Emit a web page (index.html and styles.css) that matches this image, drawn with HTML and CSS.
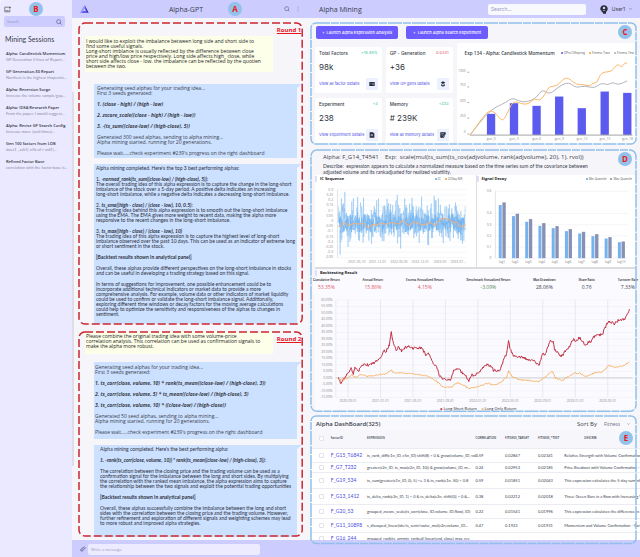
FILE: index.html
```html
<!DOCTYPE html>
<html lang="en">
<head>
<meta charset="utf-8">
<title>Alpha-GPT</title>
<link rel="stylesheet" href="styles.css">
</head>
<body>
<div class="app">
  <aside class="sidebar">
    <div class="sidebar-top">
      <button class="icon-button" aria-label="New session"><svg class="icon-new" viewBox="0 0 18 18"><path d="M12 3H2v12h13V9M15 1v6M12 4h6M4 12h8" fill="none" stroke="#444" stroke-width="1.6"/></svg></button>
      <span class="marker">B</span>
    </div>
    <label class="side-search">
      <input type="search" placeholder="Search" aria-label="Search sessions">
      <svg class="icon-search" viewBox="0 0 18 18"><circle cx="8" cy="8" r="6" fill="none" stroke="#555a88" stroke-width="2"/><path d="M12 12l5 5" stroke="#555a88" stroke-width="2"/></svg>
    </label>
    <h2 class="side-title">Mining Sessions</h2>
    <ul class="sessions">
      <li><b>Alpha: Candlestick Momentum</b><span>GP Generation 5 lines of Report...</span></li>
      <li><b>GP Generation-50 Report</b><span>Northest is the highest thopenist...</span></li>
      <li><b>Alpha: Reversion Surge</b><span>Increase the volume sample/gap...</span></li>
      <li><b>Alpha: IDEA Research Paper</b><span>From the paper, I would suggest...</span></li>
      <li><b>Alpha: Revise GP Search Config</b><span>Increase move (and/times)...</span></li>
      <li><b>Gen 100 factors from LOB</b><span>does1 _ask1( n5b of r-askT(...</span></li>
      <li><b>Refined Factor Base</b><span>correlation with the factor base is...</span></li>
    </ul>
  </aside>

  <main class="chat">
    <header class="bar chat-bar">
      <svg class="logo" viewBox="0 0 27 27"><path d="M14 1L26 24H1z" fill="#6a5cf0"/><path d="M13 9l5 9H9z" fill="#ccf"/><path d="M14 1L1 24l5-1L15 7z" fill="#8fa0ff"/><path d="M14 1l12 23-6-3z" fill="#3d2fb8"/></svg>
      <h1 class="chat-title">Alpha-GPT</h1>
      <span class="marker">A</span>
      <button class="icon-button chat-search" aria-label="Search chat"><svg class="icon-search" viewBox="0 0 18 18"><circle cx="8" cy="8" r="6" fill="none" stroke="#667" stroke-width="2"/><path d="M12 12l4 4" stroke="#667" stroke-width="2"/></svg></button>
      <button class="icon-button" aria-label="More"><svg class="icon-dots" viewBox="0 0 6 18"><g fill="#889"><circle cx="3" cy="3" r="1.5"/><circle cx="3" cy="9" r="1.5"/><circle cx="3" cy="15" r="1.5"/></g></svg></button>
    </header>
    <div class="chat-body">
      <section class="round round-one">
        <svg class="frame frame-red"><rect x="1" y="1" rx="6"/></svg>
        <h2 class="round-label">Round 1</h2>
        <div class="bubble user user-tall">
          <p>I would like to exploit the imbalance between long side and short side to<br>find some useful signals.<br>Long-short imblance is usually reflected by the difference between close<br>price and high/low price respectively. Long side affects high_ close, while<br>short side affects close - low. the imbalance can be reflected by the quotien<br>between the two.</p>
        </div>
        <div class="bubble bot bot-first">
          <p>Generating seed alphas for your trading idea...<br>First 3 seeds generated:</p>
          <p><em>1. (close - high) / (high - low)</em></p>
          <p><em>2. zscore_scale((close - high) / (high - low))</em></p>
          <p><em>3. -(ts_sum((close-low) / (high-close), 5))</em></p>
          <p>Generated 300 seed alphas, sending to alpha mining...<br>Alpha mining started, running for 20 generations.</p>
          <p>Please wait.....check experiment #239's progress on the right dashboard</p>
        </div>
        <div class="bubble bot bot-long">
          <p>Alpha mining completed. Here's the top 3 best performing alphas:</p>
          <p>1. <em>-normed_rank(ts_sum((close-low) / (high-close), 5)):</em><br>The overall trading idea of this alpha expression is to capture the change in the long-short<br>imbalance of the stock over a 5-day period. A positive delta indicates an increasing<br>long-short imbalance, while a negative delta indicates a decreasing long-short imbalance.</p>
          <p>2. <em>ts_ema((high - close) / (close - low), 10, 0.5):</em><br>The trading idea behind this alpha expression is to smooth out the long-short imbalance<br>using the EMA. The EMA gives more weight to recent data, making the alpha more<br>responsive to the recent changes in the long-short imbalance.</p>
          <p>3. <em>ts_max((high - close) / (close - low), 10)</em><br>The trading idea of this alpha expression is to capture the highest level of long-short<br>imbalance observed over the past 10 days. This can be used as an indicator of extreme long<br>or short sentiment in the stock.</p>
          <p><strong>[Backtest results shown in analytical panel]</strong></p>
          <p>Overall, these alphas provide different perspectives on the long-short imbalance in stocks<br>and can be useful in developing a trading strategy based on this signal.</p>
          <p>In terms of suggestions for improvement, one possible enhancement could be to<br>incorporate additional technical indicators or market data to provide a more<br>comprehensive analysis. For example, volume data or other indicators of market liquidity<br>could be used to confirm or validate the long-short imbalance signal. Additionally,<br>exploring different time windows or decay factors for the moving average calculations<br>could help to optimize the sensitivity and responsiveness of the alphas to changes in<br>sentiment.</p>
        </div>
      </section>
      <section class="round round-two">
        <svg class="frame frame-red"><rect x="1" y="1" rx="6"/></svg>
        <h2 class="round-label">Round 2</h2>
        <div class="bubble user user-short">
          <p>Please combine the original trading idea with some volume-price<br>correlation analysis. This correlation can be used as confirmation signals to<br>make the alpha more robust.</p>
        </div>
        <div class="bubble bot bot-first">
          <p>Generating seed alphas for your trading idea...<br>First 3 seeds generated:</p>
          <p><em>1. ts_corr(close, volume, 10) * rank(ts_mean((close-low) / (high-close), 3))</em></p>
          <p><em>2. ts_corr(close, volume, 5) * ts_mean((close-low) / (high-close), 5)</em></p>
          <p><em>3. ts_corr(close, volume, 10) * ((close-low) / (high-close))</em></p>
          <p>Generated 50 seed alphas, sending to alpha mining...<br>Alpha mining started, running for 20 generations.</p>
          <p>Please wait.....check experiment #239's progress on the right dashboard</p>
        </div>
        <div class="bubble bot bot-best">
          <p>Alpha mining completed. Here's the best performing alpha:</p>
          <p><em>1. -rank(ts_corr(close, volume, 10)) * rank(ts_mean((close-low) / (high-close), 3)):</em></p>
          <p>The correlation between the closing price and the trading volume can be used as a<br>confirmation signal for the imbalance between the long and short sides. By multiplying<br>the correlation with the ranked mean imbalance, the alpha expression aims to capture<br>the relationship between the two signals and exploit the potential trading opportunities</p>
          <p><strong>[Backtest results shown in analytical panel]</strong></p>
          <p>Overall, these alphas successfully combine the imbalance between the long and short<br>sides with the correlation between the closing price and the trading volume. However,<br>further refinement and exploration of different signals and weighting schemes may lead<br>to more robust and improved alpha strategies.</p>
        </div>
      </section>
    </div>
    <footer class="bar composer">
      <button class="icon-button" aria-label="Attach file"><svg class="icon-clip" viewBox="0 0 18 18"><path d="M14 6l-7 7c-2 2-5-1-3-3l7-7c3-2 6 1 4 4l-7 8c-3 3-8-1-5-5l6-6" fill="none" stroke="#5c6080" stroke-width="1.8"/></svg></button>
      <input class="message" type="text" placeholder="Write a message" aria-label="Message">
    </footer>
  </main>

  <div class="mining">
    <header class="bar mining-bar">
      <h1>Alpha Mining</h1>
      <input class="top-search" type="search" placeholder="Search..." aria-label="Search">
      <button class="user-menu"><svg class="avatar" viewBox="0 0 24 27"><path d="M12 1c6 0 11 4 11 10 0 5-3 8-5 9v6H9v-4H5v-4l-4-4C0 6 5 1 12 1z" fill="#2b2b38"/><circle cx="12" cy="9" r="4" fill="#ccf"/><path d="M8 17c1-3 7-3 9 0z" fill="#ccf"/></svg>User1<svg class="chevron" viewBox="0 0 9 6"><path d="M1 1l3.500 3.500L8 1" fill="none" stroke="#555" stroke-width="1.500"/></svg></button>
    </header>

    <section class="panel overview">
      <svg class="frame frame-blue"><rect x="1" y="1" rx="5"/></svg>
      <div class="actions">
        <button class="launch"><i>+</i>Launch Alpha Expression Analysis</button>
        <button class="launch"><i>+</i>Launch Alpha Search Experiment</button>
        <span class="marker">C</span>
      </div>
      <div class="overview-grid">
        <div class="cards">
          <article class="card"><div class="card-head"><h3>Total Factors</h3><span class="up">+16.46%</span></div><p class="figure">98k</p><div class="card-foot"><a href="#factors">View all factor details</a><span class="badge"><svg viewBox="0 0 18 18"><rect x="1" y="3" width="16" height="12" rx="1" fill="#222838"/><path d="M3 10l3-3 3 3M10 7h5M10 11h5" stroke="#cdd6f5" fill="none" stroke-width="1.500"/></svg></span></div></article>
          <article class="card"><div class="card-head"><h3>GP - Generation</h3><span class="down">0.0341</span></div><p class="figure">+36</p><div class="card-foot"><a href="#gp">View GP gens details</a><span class="badge"><svg viewBox="0 0 18 18"><path d="M9 1l7 4-7 4-7-4z" fill="#222838"/><path d="M3 9l6 3 6-3v5l-6 3-6-3z" fill="#4a5062"/></svg></span></div></article>
          <article class="card"><div class="card-head"><h3>Experiment</h3><span class="up">+3</span></div><p class="figure">238</p><div class="card-foot"><a href="#experiments">View Experiment details</a><span class="badge"><svg viewBox="0 0 18 18"><path d="M2 1h10l4 4v12H2z" fill="#222838"/><path d="M6 13V7h5v6M6 10h5" stroke="#dde3fa" fill="none" stroke-width="1.500"/></svg></span></div></article>
          <article class="card"><div class="card-head"><h3>Memory</h3><span class="up">+233</span></div><p class="figure"># 239K</p><div class="card-foot"><a href="#memory">view all memory details</a><span class="badge"><svg viewBox="0 0 18 18"><path d="M1 1h16v5l-5 11H1z" fill="#222838"/><path d="M4 5h8M4 9h6M9 15l7-8" stroke="#dde3fa" fill="none" stroke-width="1.500"/></svg></span></div></article>
        </div>
        <div class="exp-card">
          <div class="exp-head"><h3>Exp 134 - Alpha: Candlestick Momentum</h3><ul class="legend"><li class="k-indigo">GPro Offspring</li><li class="k-orange">Fitness Train</li><li class="k-gray">Fitness Test</li></ul></div>
          <svg class="plot" id="exp" viewBox="456 174 540 257" role="img" aria-label="Fitness by generation"></svg>
        </div>
      </div>
    </section>

    <section class="panel analysis">
      <svg class="frame frame-blue"><rect x="1" y="1" rx="6"/></svg>
      <span class="marker marker-corner">D</span>
      <h2 class="alpha-name">Alpha: F_G14_T4541 &nbsp; &nbsp;Exp: &nbsp;scale(mul(ts_sum(ts_cov(adjvolume, rank(adjvolume), 20), 1), rvol))</h2>
      <p class="describe">Describe: &nbsp;expression appears to calculate a normalized measure based on the time series sum of the covariance between<br>adjusted volume and its rankadjusted for realized volatility.</p>
      <div class="figures">
        <div class="figure-box"><div class="plot-head"><h3>IC Sequence</h3><ul class="legend"><li class="k-sky">IC</li><li class="k-orange">22Day MA</li></ul></div>
          <svg class="plot" id="ic" viewBox="30 114 483 252" role="img" aria-label="IC sequence"></svg></div>
        <div class="figure-box"><div class="plot-head"><h3>Signal Decay</h3><ul class="legend"><li class="k-sky">Min Quantile</li><li class="k-slate">Max Quantile</li></ul></div>
          <svg class="plot" id="decay" viewBox="516 114 477 252" role="img" aria-label="Signal decay"></svg></div>
      </div>
      <div class="plot-head backtest-head"><h3>Backtesting Result</h3></div>
      <dl class="stats">
        <div><dt>Cumulative Return</dt><dd class="red">53.35%</dd></div>
        <div><dt>Annual Return</dt><dd class="red">15.86%</dd></div>
        <div><dt>Excess Annualized Return</dt><dd class="red">4.15%</dd></div>
        <div><dt>Benchmark Annualized Return</dt><dd class="green">-3.09%</dd></div>
        <div><dt>Max Drawdown</dt><dd>28.06%</dd></div>
        <div><dt>Share Ratio</dt><dd>0.76</dd></div>
        <div><dt>Turnover Rate</dt><dd>7.33%</dd></div>
      </dl>
      <svg class="plot" id="backtest" viewBox="22 84 972 354" role="img" aria-label="Backtesting result"></svg>
    </section>

    <section class="panel dashboard">
      <svg class="frame frame-blue frame-top"><rect x="1" y="1" rx="5"/></svg>
      <span class="marker marker-table">E</span>
      <div class="dash-head"><h2>Alpha DashBoard(325)</h2><label for="sort">Sort By</label><select id="sort"><option>Fitness</option></select><svg class="chevron" viewBox="0 0 9 6"><path d="M1 1l3.500 3.500L8 1" fill="none" stroke="#777" stroke-width="1.500"/></svg></div>
      <table>
        <colgroup><col class="c-check"><col class="c-factor"><col class="c-expr"><col class="c-corr"><col class="c-fit"><col class="c-test"><col class="c-desc"></colgroup>
        <thead><tr><th><input type="checkbox" aria-label="Select all"></th><th>FactorID</th><th>EXPRESSION</th><th>CORRELATION</th><th>FITNESS_TARGET</th><th>FITNESS_*TEST</th><th class="th-desc">DESCRIB</th></tr></thead>
        <tbody>
          <tr><td><input type="checkbox" aria-label="Select F_G15_T6842"></td><td><a href="#f1">F_G15_T6842</a></td><td>ts_rank_diff(c1n_ID, c5n_ID) shift(8) &gt; 0 &amp; grow(volume_ID, vol</td><td>0.59</td><td>0.02847</td><td>0.02341</td><td>Relative Strength with Volume Confirmation - W</td></tr>
          <tr class="row-s"><td><input type="checkbox" aria-label="Select F_G7_T232"></td><td><a href="#f2">F_G7_T232</a></td><td>greater(c2n_ID, ts_max(c2n_ID, 10)) &amp; grow(volume_ID, m...</td><td>0.24</td><td>0.02953</td><td>0.02185</td><td>Price Breakout with Volume Confirmation - Var</td></tr>
          <tr class="row-l"><td><input type="checkbox" aria-label="Select F_G19_534"></td><td><a href="#f3">F_G19_534</a></td><td>ts_sum(greater(c1n_ID, 0), 5) &gt;= 3 &amp; ts_rank(c1n, 50) &gt; 0.8</td><td>0.59</td><td>0.01851</td><td>0.02043</td><td>This expression calculates the 5-day sum of the</td></tr>
          <tr class="row-l"><td><input type="checkbox" aria-label="Select F_G13_1412"></td><td><a href="#f4">F_G13_1412</a></td><td>ts_delta_rank(c2n_ID, 1) &gt; 0 &amp; ts_delta(c2n, shift(0)) &gt; 0 &amp;...</td><td>0.38</td><td>0.02212</td><td>0.02018</td><td>Three Green Bars in a Row with Increasing Vol</td></tr>
          <tr><td><input type="checkbox" aria-label="Select F_G20_53"></td><td><a href="#f5">F_G20_53</a></td><td>grouped_zscore_scale(ts_corr(close, ID,volume, ID,flow), ID)</td><td>0.22</td><td>0.01541</td><td>0.01996</td><td>This expression calculates the difference in the</td></tr>
          <tr><td><input type="checkbox" aria-label="Select F_G11_10898"></td><td><a href="#f6">F_G11_10898</a></td><td>s_discoped_linear(ids/ts_semi/swise_mul(c2n,volume_ID...</td><td>0.47</td><td>0.1923</td><td>0.01931</td><td>Momentum and Volume Confirmation - Variat</td></tr>
          <tr class="row-last"><td><input type="checkbox" aria-label="Select F_G16_244"></td><td><a href="#f7">F_G16_244</a></td><td>grouped_rank(ts_argmin_ranked( linear(end, close) max, rev</td><td></td><td></td><td></td><td></td></tr>
        </tbody>
      </table>
    </section>
    <footer class="mining-footer"></footer>
  </div>
</div>
<script src="charts.js"></script>
</body>
</html>
```
FILE: styles.css
```css
* { box-sizing: border-box; }
body { margin: 0; background: #f6f5fa; color: #3a3f4c; font-family: "Open Sans", "Noto Sans", sans-serif; font-size: 5px; line-height: 5px; }
h1, h2, h3, p, ul, dl, dd { margin: 0; padding: 0; font-weight: 400; }
ul { list-style: none; }
button, input, select { font: inherit; color: inherit; border: 0; margin: 0; padding: 0; background: none; appearance: none; }
input::placeholder { color: #9a9ac0; opacity: 1; }
a { color: #4a4ae0; text-decoration: none; }
svg { display: block; }
.app { display: grid; grid-template-columns: minmax(0, 72fr) minmax(0, 235fr) minmax(0, 333fr); min-height: 100vh; }
.bar { display: flex; align-items: center; height: 18px; background: #ccccff; }
.marker { display: grid; place-items: center; flex: none; width: 14px; height: 14px; border-radius: 50%; background: #93c1ea; color: #f01818; font: 700 8px/14px "Open Sans", sans-serif; }
.icon-search { width: 6px; height: 6px; }
.icon-button { flex: none; }

.sidebar { background: #ebe9ff; padding: 2px 4px; font-family: Lato, sans-serif; border-top-left-radius: 4px; }
.sidebar-top { display: flex; gap: 18px; height: 14px; }
.icon-new { width: 7px; height: 7px; }
.side-search { display: flex; align-items: center; height: 11px; margin: 0 3px 0 0; padding: 0 3px; border-radius: 2px; background: #ccccff; }
.side-search input { flex: 1; min-width: 0; font-size: 4px; }
.side-title { margin: 8px 0 7px 1px; font: 400 7px/9px Lato, sans-serif; }
.sessions { display: grid; gap: 6px; padding-left: 2px; white-space: nowrap; }
.sessions b, .sessions span { display: block; line-height: 6px; }
.sessions b { color: #303440; font-size: 4px; font-family: "Open Sans", sans-serif; font-weight: 600; }
.sessions span { font-size: 4px; color: #8c8ca6; }

.chat { display: flex; flex-direction: column; background: #f6f5fa; }
.chat-bar { padding: 0 8px; }
.logo { width: 9px; height: 9px; }
.chat-title { flex: 1; text-align: right; font: 400 7px/9px "Open Sans", sans-serif; }
.chat-bar .marker { margin: 0 42px 0 25px; }
.chat-search { margin-right: 7px; }
.icon-dots { width: 2px; height: 6px; }
.chat-body { flex: 1; display: grid; align-content: start; gap: 6px; padding: 4px 4px 3px 6px; background: linear-gradient(#dedee4, #dedee4) 0 74px / 2px 374px no-repeat; }
.round { position: relative; padding: 0 6px 0 7px; }
.round-one { padding-top: 14px; padding-bottom: 1px; }
.round-two { padding-top: 1px; }
.frame { position: absolute; inset: 0; width: 100%; height: 100%; pointer-events: none; z-index: 1; }
.frame rect { width: calc(100% - 2px); height: calc(100% - 2px); fill: none; }
.frame-red rect { stroke: #cc2630; stroke-width: 1.5px; stroke-dasharray: 8 3; }
.frame-blue rect { stroke: #8fc0ea; stroke-width: 1.5px; stroke-dasharray: 14 1 8 1; }
.round-label { position: absolute; top: 4px; right: 2px; color: #e8141c; font: 700 6px/8px "Open Sans", sans-serif; text-decoration: underline; }
.bubble { white-space: nowrap; }
.bubble em { font-weight: 700; }
.bubble p + p { margin-top: 6px; }
.user { margin-right: 24px; padding: 3px 1px; background: #fdffe8; color: #222; border-radius: 1px; }
.user-tall { min-height: 35px; }
.user-short { min-height: 22px; padding-top: 2px; }
.bot { position: relative; margin: 6px 0 0 9px; padding: 2px 3px; background: #cce0ff; }
.bot::after { content: ""; position: absolute; top: 0; left: 100%; border-top: 4px solid #cce0ff; border-right: 5px solid transparent; }
.bot-first { min-height: 74px; margin-top: 12px; }
.round-two .bot-first { margin-top: 8px; min-height: 77px; padding: 3px 1px; }
.bot-long { min-height: 160px; padding: 2px; font-family: Lato, sans-serif; color: #2c3242; }
.bot-best { min-height: 92px; padding: 2px 6px; font-family: Lato, sans-serif; color: #2c3242; }
.composer { padding: 0 8px; gap: 2px; }
.icon-clip { width: 6px; height: 6px; }
.message { flex: 0 1 172px; height: 11px; padding: 0 3px; border-radius: 2px; background: #ecebff; font-size: 4px; }

.mining { position: relative; overflow: hidden; display: grid; align-content: start; padding-bottom: 13px; font-family: Inter, sans-serif; font-size: 4px; }
.mining-bar { padding: 0 8px 0 12px; }
.mining-bar h1 { flex: 1; font: 400 7px/9px "Open Sans", sans-serif; }
.top-search { width: 98px; height: 11px; padding: 0 3px; border-radius: 2px; background: #f8f8ff; font-size: 5px; }
.user-menu { display: flex; align-items: center; gap: 4px; margin-left: 14px; font-size: 5px; line-height: 9px; }
.avatar { width: 8px; height: 9px; }
.chevron { width: 3px; height: 2px; }
.panel { position: relative; margin: 4px 3px 0; padding: 4px 1px 1px 5px; }
.analysis { padding-top: 4px; }
.actions { display: flex; gap: 8px; height: 17px; padding-left: 1px; }
.launch { flex: 0 1 82px; height: 13px; border-radius: 2px; background: #6c5cff; color: #fff; font-size: 4px; font-weight: 500; white-space: nowrap; }
.launch i { font-style: normal; margin-right: 2px; }
.actions .marker { margin: -1px 4px 0 auto; }
.overview-grid { display: grid; grid-template-columns: minmax(0, 138fr) minmax(0, 180fr); column-gap: 4px; }
.cards { display: grid; grid-template-columns: 1fr 1fr; gap: 5px 4px; padding-top: 4px; }
.card { height: 46px; padding: 3px 4px; border-radius: 2px; background: #fff; white-space: nowrap; }
.card-head, .card-foot { display: flex; justify-content: space-between; align-items: center; line-height: 6px; }
.card-head h3 { font-weight: 500; }
.up { color: #2cc09c; }
.down { color: #e06070; }
.figure { margin: 7px 0 6px; font-size: 8px; line-height: 9px; color: #2e3340; }
.badge { display: grid; place-items: center; width: 12px; height: 12px; background: #edf0ff; }
.badge svg { width: 6px; height: 6px; }
.exp-card { background: #fff; padding-top: 7px; border-radius: 2px 0 0 0; }
.exp-head { display: flex; justify-content: space-between; padding: 0 2px 0 8px; line-height: 6px; height: 8px; white-space: nowrap; }
.exp-head h3 { font-family: "Open Sans", sans-serif; font-weight: 600; }
.legend { display: flex; gap: 4px; font-size: 3px; color: #666; }
.legend li::before { content: ""; display: inline-block; width: 2px; height: 2px; margin-right: 1px; border-radius: 50%; background: currentColor; vertical-align: middle; }
.k-indigo::before { color: #5a5af0; } .k-orange::before { color: #f5a03c; } .k-gray::before { color: #aaa; } .k-sky::before { color: #5aa5ea; } .k-slate::before { color: #7d88ac; }
.plot { width: 100%; height: auto; overflow: hidden; font: 10px "Open Sans", sans-serif; }
.alpha-name { padding-left: 8px; font: 400 6px/8px "Open Sans", sans-serif; white-space: nowrap; }
.describe { padding: 2px 0 0 8px; font: 5px/6px Lato, sans-serif; white-space: nowrap; }
.marker-corner { position: absolute; top: 3px; right: 5px; }
.figures { display: grid; grid-template-columns: minmax(0, 161fr) minmax(0, 159fr); }
.figure-box { background: #fff; border-bottom: 2px solid #dcdcdc; }
.figure-box + .figure-box { box-shadow: -1px 0 #ddd; }
.plot-head { display: flex; justify-content: space-between; align-items: center; height: 8px; padding-right: 4px; }
.figure-box:first-child .plot-head { padding-right: 14px; }
.plot-head h3 { padding-left: 3px; font: 700 4px/6px "Open Sans", sans-serif; border-left: 2px solid #dfdffa; color: #222; }
.stats { display: flex; justify-content: space-between; margin: 0 -2px; padding-bottom: 3px; text-align: center; white-space: nowrap; }
.stats dt { font-size: 3px; line-height: 6px; color: #333; font-weight: 600; }
.stats dd { font: 5px/8px "Open Sans", sans-serif; }
.red { color: #e0606a; } .green { color: #4f8a56; }
.analysis > .plot, .backtest-head, .stats { background: #fbfaff; }
.dashboard { margin-top: 3px; padding: 2px 0 0 1px; background: #f9f9fd; }
.dash-head { display: flex; align-items: center; gap: 7px; height: 13px; padding: 0 7px 0 5px; font: 500 6px/8px "Open Sans", sans-serif; }
.dash-head h2 { flex: 1; font-size: 6px; font-weight: 600; }
.dash-head select { width: 16px; font-size: 5px; color: #667; }
table { width: calc(100% + 3px); table-layout: fixed; border-collapse: collapse; white-space: nowrap; font: 4px/5px Lato, sans-serif; }
th, td { padding: 0; height: 14px; text-align: left; font-weight: 400; border-bottom: 1px solid #ebebf2; background: #fff; }
th { height: 18px; font: 600 3px/5px "Open Sans", sans-serif; background: #f6f6fb; }
.th-desc { padding-left: 20px; }
.row-s td { height: 10px; } .row-l td { height: 16px; } .row-last td { height: 12px; }
td a { font-size: 5px; }
td:first-child, th:first-child { padding-left: 8px; }
input[type="checkbox"] { display: block; width: 5px; height: 5px; border: 1px solid #e2e2ee; border-radius: 1px; background: #fff; }
.c-check { width: 6%; } .c-factor { width: 11%; } .c-expr { width: 33%; } .c-corr { width: 9%; } .c-fit { width: 10%; } .c-test { width: 8%; } .c-desc { width: 23%; }
.marker-table { position: absolute; top: 16px; right: 4px; }
.mining-footer { position: absolute; inset: auto 0 0; height: 18px; background: #ccccff; }
```
FILE: charts.js
```js
const line = (x1, y1, x2, y2, c, w = 1) => `<path d="M${x1} ${y1}L${x2} ${y2}" stroke="${c}" stroke-width="${w}" fill="none"/>`;
const text = (x, y, s, anchor = 'middle', c = '#888') => `<text x="${x}" y="${y + 3}" text-anchor="${anchor}" fill="${c}">${s}</text>`;
const rect = (x, y, w, h, c) => `<rect x="${x}" y="${y}" width="${w}" height="${h}" fill="${c}"/>`;
const poly = (pts, c, w) => `<path d="M${pts.map(p => p.map(v => v.toFixed(1)).join(' ')).join('L')}" stroke="${c}" stroke-width="${w}" fill="none" stroke-linejoin="round"/>`;
let seed = 11;
const rand = () => (seed = (seed * 16807) % 2147483647) / 2147483647;
const put = (id, s) => { document.getElementById(id).innerHTML = s; };

// Smooth curve through points by quadratic midpoints
function smooth(p, c) {
  let d = `M${p[0]}`;
  for (let i = 1; i < p.length - 1; i++) d += `Q${p[i]} ${(p[i][0] + p[i + 1][0]) / 2},${(p[i][1] + p[i + 1][1]) / 2}`;
  return `<path d="${d}L${p[p.length - 1]}" stroke="${c}" stroke-width="3" fill="none"/>`;
}
// Jagged series between way points
function jagged(p, step, amp) {
  const out = [];
  for (let i = 0; i < p.length - 1; i++) {
    const [x0, y0] = p[i], [x1, y1] = p[i + 1];
    for (let x = x0; x < x1; x += step) out.push([x, y0 + (y1 - y0) * (x - x0) / (x1 - x0) + (rand() - 0.5) * amp]);
  }
  out.push(p[p.length - 1]);
  return out;
}

let s = '';
[['1000', 212], ['750', 256], ['500', 303], ['250', 350], ['0', 398]].forEach(([t, y]) => { s += text(482, y, t, 'end') + line(487, y + 5, 493, y + 5, '#888', 2); });
[[546, 342], [615, 310], [683, 318], [751, 290], [819, 325], [888, 275], [956, 279]].forEach(([x, y], i) => {
  s += rect(x, y, 25, 405 - y, '#5b5bef') + text(x + 13, 418, 'gen_' + [0, 3, 6, 9, 12, 15, 18][i]);
});
s += line(494, 406, 984, 406, '#777', 2);
s += smooth([[496,405],[530,360],[560,330],[580,318],[600,310],[622,293],[640,303],[665,308],[695,294],[712,268],[735,284],[760,262],[785,248],[800,252],[815,264],[840,257],[870,266],[890,248],[910,256],[925,246],[940,256],[968,243]], '#b4b4bc');
s += smooth([[496,405],[520,372],[545,338],[560,332],[575,342],[592,366],[606,344],[625,302],[650,312],[670,314],[690,294],[705,304],[720,285],[733,258],[755,260],[770,243],[785,232],[800,241],[815,254],[840,254],[855,260],[865,248],[877,250],[890,216],[922,216],[938,190],[953,204],[960,188],[968,190]], '#fbb769');
put('exp', s);

s = '';
['0.3','0.25','0.2','0.15','0.1','0.05','0','-0.05','-0.1','-0.15','-0.2','-0.25','-0.3','-0.35'].forEach((t, i) => { const y = 134 + i * 15.6; s += text(84, y, t, 'end') + line(97, y, 483, y, '#e4e6ee'); });
s += line(97, 134, 97, 337, '#aab');
const ic = [], core = [];
for (let x = 100; x < 480; x += 0.8) {
  ic.push([x, 230 + (rand() + rand() + rand() - 1.5) * 62]);
  core.push([x, 234 + (rand() + rand() - 1) * 36]);
}
[[105,328],[109,160],[115,175],[166,172],[199,296],[276,150],[286,310],[320,158],[313,176],[367,298],[392,166],[399,160],[432,178],[469,286]].forEach(([x, y]) => { ic[Math.round((x - 100) / 0.8)] = [x, y]; });
s += poly(ic, '#86bef1', 1.5) + poly(core, '#6fb1ee', 1.5);
s += smooth([[100,244],[108,246],[118,228],[128,244],[145,234],[165,238],[176,232],[190,252],[200,236],[212,242],[225,234],[245,238],[262,230],[280,240],[294,222],[308,246],[325,228],[340,236],[358,240],[374,230],[388,242],[400,228],[412,218],[436,224],[444,236],[454,228],[464,248],[480,238]], '#eeb083');
[['2021-05-10',155],['2021-12-01',217],['2022-05-05',281],['2022-12-01',345],['2023-05',404],['2023-07...',458]].forEach(([t, x]) => { s += text(x, 349, t); });
put('ic', s);

s = '';
[['0.6',139],['0.4',205],['0.3',239],['0.2',272],['0.1',306],['0',339]].forEach(([t, y]) => { s += text(559, y, t, 'end') + line(571, y, 968, y, '#e0e2ea'); });
s += line(571, 139, 571, 339, '#aab');
[[180,172],[213,206],[230,222],[242,234],[249,243],[258,252],[265,260],[273,267],[280,276],[291,289]].forEach(([a, b], i) => {
  const x = 581 + i * 39.6;
  s += rect(x, a, 9, 339 - a, '#76b2ee') + rect(x + 11, b, 10, 339 - b, '#8791b3') + text(x + 10, 351, 'lag' + (i + 1));
});
put('decay', s);

s = '';
for (let i = 0; i < 16; i++) { const y = 102 + i * 19.67; s += text(75, y, (60 - i * 5) + '.00%', 'end') + line(85, y, 984, y, i === 12 ? '#ccc' : '#e6e6ee', i === 12 ? 3 : 1); }
['2020-09-01','2021-01-01','2021-05-01','2021-09-01','2022-01-01','2022-05-01','2022-09-01','2023-01-01','2023-05-01'].forEach((t, i) => { const x = 122 + i * 98.3; s += line(x, 102, x, 397, '#e0e0e8', 2) + text(x, 409, t); });
s += line(85, 102, 85, 397, '#ccc');
s += poly(jagged([[93,340],[101,354],[108,340],[118,330],[126,322],[131,310],[138,324],[143,308],[155,316],[165,298],[185,299],[205,290],[221,280],[230,255],[236,260],[247,240],[253,200],[258,225],[268,252],[275,245],[284,256],[300,243],[320,248],[345,246],[357,268],[366,262],[378,292],[390,306],[400,333],[412,343],[435,342],[440,318],[450,308],[463,318],[475,328],[488,346],[497,330],[518,325],[537,296],[555,302],[562,316],[580,318],[590,292],[602,265],[608,224],[613,250],[624,274],[640,272],[660,280],[680,284],[702,298],[711,264],[718,272],[733,228],[743,226],[748,252],[767,276],[778,260],[793,244],[803,222],[811,226],[823,216],[839,238],[856,228],[873,206],[892,208],[903,180],[912,168],[930,174],[942,162],[960,160],[974,130]], 2, 9), '#bf2f40', 3);
s += poly(jagged([[93,342],[108,344],[122,338],[133,330],[143,336],[165,328],[180,334],[221,328],[240,324],[252,314],[262,324],[285,322],[350,330],[366,334],[390,348],[410,366],[435,366],[452,352],[470,360],[488,370],[520,364],[545,354],[565,360],[585,352],[602,336],[608,318],[620,334],[640,344],[670,346],[700,350],[715,338],[740,317],[750,338],[770,346],[790,334],[805,324],[823,324],[845,334],[870,322],[892,320],[912,300],[930,306],[955,302],[974,290]], 2, 4), '#f7b264', 3);
s += rect(402, 430, 5, 5, '#c01828') + `<g font-size="12">${text(411, 432, 'Long Short Return', 'start', '#222')}</g>` + rect(527, 430, 5, 5, '#f5a94c') + `<g font-size="12">${text(535, 432, 'Long Only Return', 'start', '#222')}</g>`;
put('backtest', s);
```
